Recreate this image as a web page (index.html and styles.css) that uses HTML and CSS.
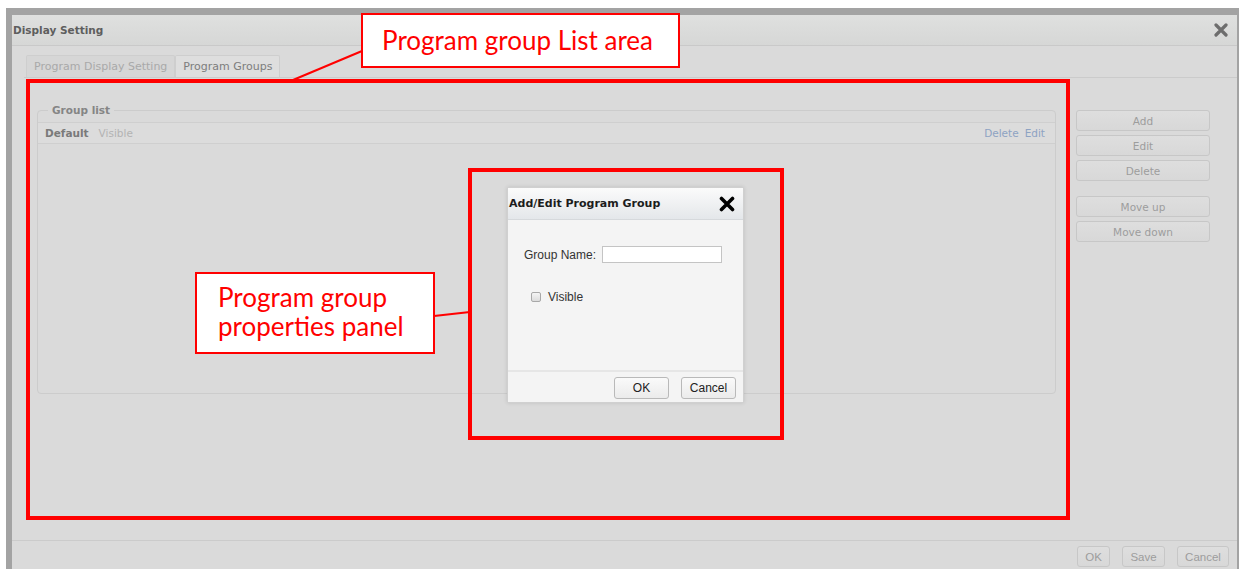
FILE: index.html
```html
<!DOCTYPE html>
<html lang="en">
<head>
<meta charset="utf-8">
<title>Display Setting</title>
<link rel="stylesheet" href="styles.css">
</head>
<body>
<div class="screen">
  <div class="dialog">
    <div class="dialog-title">
      <span class="dialog-name">Display Setting</span>
      <svg class="dialog-close" viewBox="0 0 14 14" width="14" height="14" aria-hidden="true">
        <path d="M2 2 L12 12 M12 2 L2 12" />
      </svg>
    </div>
    <div class="dialog-body">
      <div class="tabs">
        <div class="tab">Program Display Setting</div>
        <div class="tab tab-active">Program Groups</div>
      </div>
      <div class="tab-panel">
        <fieldset class="group-list">
          <legend>Group list</legend>
          <div class="group-row">
            <span class="group-name">Default</span>
            <span class="group-flag">Visible</span>
            <span class="group-links"><a>Delete</a><a>Edit</a></span>
          </div>
        </fieldset>
        <div class="side-buttons">
          <button class="btn">Add</button>
          <button class="btn">Edit</button>
          <button class="btn">Delete</button>
          <button class="btn btn-sep">Move up</button>
          <button class="btn">Move down</button>
        </div>
      </div>
    </div>
    <div class="dialog-footer">
      <button class="btn btn-ok">OK</button>
      <button class="btn btn-save">Save</button>
      <button class="btn btn-cancel">Cancel</button>
    </div>
  </div>
</div>

<div class="modal">
  <div class="modal-title">
    <span>Add/Edit Program Group</span>
    <svg class="modal-close" viewBox="0 0 16 16" width="16" height="16" aria-hidden="true">
      <path d="M2.5 2.5 L13.5 13.5 M13.5 2.5 L2.5 13.5" />
    </svg>
  </div>
  <div class="modal-body">
    <label class="field">Group Name: <span class="text-input"></span></label>
    <label class="check"><span class="checkbox"></span>Visible</label>
  </div>
  <div class="modal-footer">
    <button class="mbtn mbtn-ok">OK</button>
    <button class="mbtn">Cancel</button>
  </div>
</div>

<div class="mark mark-list"></div>
<div class="mark mark-panel"></div>
<svg class="leaders" width="1239" height="569" aria-hidden="true">
  <line x1="293" y1="80" x2="362" y2="51" />
  <line x1="434" y1="316" x2="470" y2="312" />
</svg>
<div class="callout callout-list">Program group List area</div>
<div class="callout callout-panel">Program group<br>properties panel</div>
</body>
</html>
```

FILE: styles.css
```css
* { box-sizing: border-box; }

html, body { height: 100%; }

body {
  margin: 0;
  padding: 8px 0 0 6px;
  background: #ffffff;
  font-family: "DejaVu Sans", Verdana, sans-serif;
  overflow: hidden;
  position: relative;
}

/* dimmed application behind the settings dialog */
.screen {
  height: 561px;
  background: #a3a3a3;
  padding: 7px 2px 0 6px;
}

.dialog {
  height: 100%;
  background: #dadada;
  display: flex;
  flex-direction: column;
}

.dialog-title {
  height: 31px;
  flex: none;
  display: flex;
  align-items: center;
  justify-content: space-between;
  padding: 0 9px 0 1px;
  background: linear-gradient(#dfe0df, #d6d7d6);
  border-bottom: 1px solid #c9c9c9;
}

.dialog-name {
  font-size: 10.5px;
  font-weight: bold;
  color: #5e5e5e;
}

.dialog-close path {
  stroke: #6d6d6d;
  stroke-width: 3.2;
  stroke-linecap: round;
  fill: none;
}

.dialog-body {
  flex: 1;
  padding: 9px 0 0 14px;
}

.tabs {
  display: flex;
  height: 22px;
}

.tab {
  height: 22px;
  padding: 0 7px;
  display: flex;
  align-items: center;
  font-size: 11px;
  color: #a9a9a9;
  background: #d6d6d6;
  border: 1px solid #cecece;
  border-bottom: none;
  border-radius: 2px 2px 0 0;
}

.tab-active {
  color: #7d7d7d;
  background: #dedede;
}

.tab-panel {
  border-top: 1px solid #cbcbcb;
  margin-left: -2px;
  padding: 26px 27px 0 13px;
  display: grid;
  grid-template-columns: 1fr 134px;
  column-gap: 20px;
  align-items: start;
}

.group-list {
  margin: 0;
  padding: 6px 0 0;
  height: 290px;
  border: 1px solid #cccccc;
  border-radius: 4px;
  min-width: 0;
}

.group-list legend {
  margin-left: 10px;
  padding: 0 4px;
  font-size: 10.5px;
  font-weight: bold;
  color: #858585;
}

.group-row {
  height: 22px;
  display: flex;
  align-items: center;
  padding: 0 10px 0 7px;
  border-top: 1px solid #cfcfcf;
  border-bottom: 1px solid #cfcfcf;
  background: #dcdcdc;
  font-size: 10.5px;
}

.group-name {
  font-weight: bold;
  color: #7a7a7a;
}

.group-flag {
  margin-left: 10px;
  color: #b3b3b3;
}

.group-links {
  margin-left: auto;
  display: flex;
  gap: 6px;
  color: #8ea3c3;
}

.side-buttons {
  margin-top: 6px;
  display: flex;
  flex-direction: column;
  gap: 4px;
}

.btn {
  height: 21px;
  padding: 0;
  font-family: "DejaVu Sans", Verdana, sans-serif;
  font-size: 10.5px;
  color: #9d9d9d;
  background: linear-gradient(#dedede, #d8d8d8);
  border: 1px solid #c7c7c7;
  border-radius: 3px;
}

.btn-sep { margin-top: 11px; }

.dialog-footer {
  height: 29px;
  flex: none;
  border-top: 1px solid #cbcbcb;
  display: flex;
  justify-content: flex-end;
  align-items: flex-start;
  gap: 12px;
  padding: 5px 8px 0 0;
}

.dialog-footer .btn { font-family: "Liberation Sans", Arial, sans-serif; font-size: 11.5px; }
.btn-ok { width: 33px; }
.btn-save { width: 43px; }
.btn-cancel { width: 52px; }

/* Add/Edit group popup */
.modal {
  position: absolute;
  left: 507px;
  top: 187px;
  width: 237px;
  height: 216px;
  background: #f4f4f4;
  border: 1px solid #d0d0d0;
  box-shadow: 0 0 4px rgba(0, 0, 0, 0.12);
  display: flex;
  flex-direction: column;
}

.modal-title {
  height: 32px;
  flex: none;
  display: flex;
  align-items: center;
  justify-content: space-between;
  padding: 0 8px 0 1px;
  background: linear-gradient(#fbfbfb, #e4e7ea);
  border-bottom: 1px solid #d6d9dc;
  font-size: 11px;
  font-weight: bold;
  color: #1c1c1c;
}

.modal-close path {
  stroke: #000000;
  stroke-width: 3.6;
  stroke-linecap: round;
  fill: none;
}

.modal-body {
  flex: 1;
  padding: 26px 0 0 16px;
  font-family: "Liberation Sans", Arial, sans-serif;
  font-size: 12px;
  color: #333333;
}

.field {
  display: flex;
  align-items: center;
  gap: 6px;
  height: 17px;
}

.text-input {
  width: 120px;
  height: 17px;
  background: #ffffff;
  border: 1px solid #c4c4c4;
}

.check {
  display: flex;
  align-items: center;
  gap: 7px;
  margin: 27px 0 0 7px;
  height: 14px;
}

.checkbox {
  width: 10px;
  height: 10px;
  border: 1px solid #a8a8a8;
  border-radius: 2px;
  background: linear-gradient(#f4f4f4, #dcdcdc);
}

.modal-footer {
  height: 32px;
  flex: none;
  border-top: 2px solid #e6e6e6;
  display: flex;
  justify-content: flex-end;
  gap: 12px;
  padding: 5px 7px 0 0;
}

.mbtn {
  width: 55px;
  height: 22px;
  padding: 0;
  font-family: "Liberation Sans", Arial, sans-serif;
  font-size: 12px;
  color: #222222;
  background: linear-gradient(#fafafa, #ebebeb);
  border: 1px solid #b9b9b9;
  border-radius: 3px;
}

/* red annotation marks */
.mark {
  position: absolute;
  border: 4px solid #ff0000;
}

.mark-list { left: 26px; top: 79px; width: 1044px; height: 441px; }
.mark-panel { left: 468px; top: 168px; width: 316px; height: 272px; }

.leaders {
  position: absolute;
  left: 0;
  top: 0;
}

.leaders line {
  stroke: #ff0000;
  stroke-width: 2;
}

.callout {
  position: absolute;
  background: #ffffff;
  border: 2px solid #ff0000;
  color: #ff0000;
  font-family: Lato, "Open Sans", sans-serif;
  font-size: 26px;
}

.callout-list {
  left: 361px;
  top: 13px;
  width: 319px;
  height: 55px;
  padding: 0 6px 2px 0;
  display: flex;
  align-items: center;
  justify-content: center;
}

.callout-panel {
  left: 195px;
  top: 272px;
  width: 240px;
  height: 82px;
  padding: 9px 0 0 21px;
  line-height: 29px;
}
```
